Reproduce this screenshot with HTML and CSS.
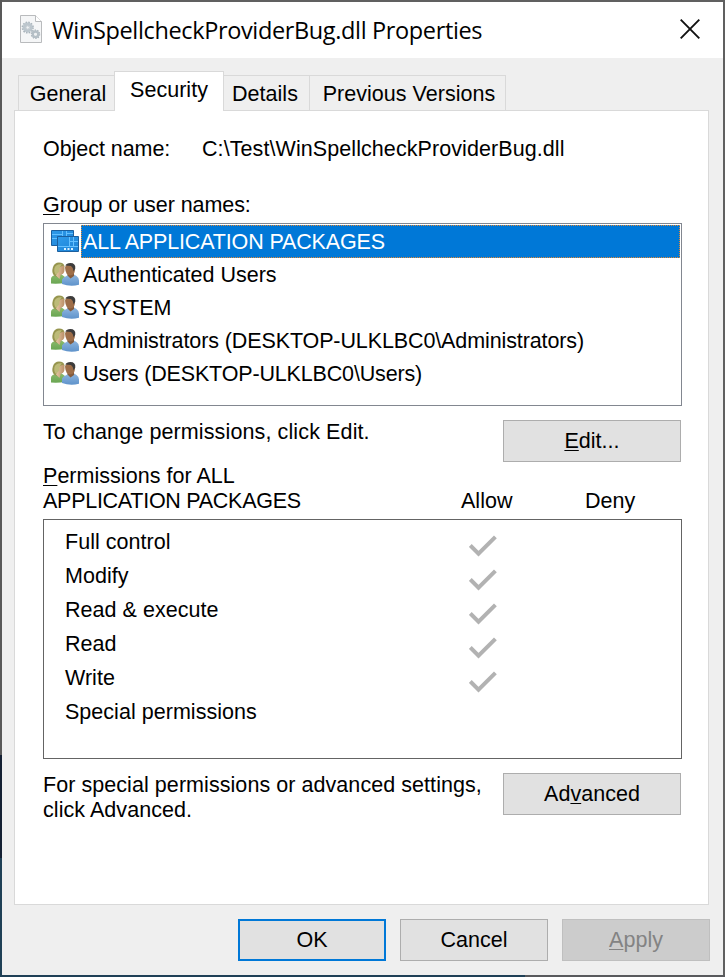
FILE: index.html
```html
<!DOCTYPE html>
<html lang="en">
<head>
<meta charset="utf-8">
<title>WinSpellcheckProviderBug.dll Properties</title>
<link rel="stylesheet" href="styles.css">
</head>
<body>
<svg width="0" height="0" class="defs">
  <defs>
    <linearGradient id="blueShirt" x1="0" y1="0" x2="0" y2="1"><stop offset="0" stop-color="#8fb6df"/><stop offset="1" stop-color="#5f93cb"/></linearGradient>
    <linearGradient id="greenShirt" x1="0" y1="0" x2="0" y2="1"><stop offset="0" stop-color="#8dbb6d"/><stop offset="1" stop-color="#6aa653"/></linearGradient>
    <linearGradient id="face" x1="0" y1="0" x2="1" y2="0"><stop offset="0" stop-color="#e6c7a4"/><stop offset="1" stop-color="#b98e66"/></linearGradient>
    <linearGradient id="tile" x1="0" y1="0" x2="1" y2="1"><stop offset="0" stop-color="#2f9bea"/><stop offset="1" stop-color="#1c82d6"/></linearGradient>
    <symbol id="users" viewBox="0 0 28 24">
      <path d="M0 21.500V17q0-2.500 3-3.500l3-1.500h4l4 3v6q-7 1-14 .5z" fill="url(#greenShirt)"/>
      <path d="M3 13.500Q.3 10.500 2 5 3.500.500 8 .5q5 0 5.500 4l-1 5-3 4-4 1.500z" fill="#96954e"/>
      <path d="M8.500 5l4.300-1.500q1.300 3.500.4 6.500-.9 2.500-3.300 2.500L8.500 17 5 13.500z" fill="url(#face)"/>
      <path d="M3.500 6q2-4.500 7.500-3.500-3 2-2.700 7L5 13Q2.500 10 3.500 6z" fill="#bdbb79"/>
      <path d="M11 22v-4.500q1-2.500 4.500-3.500l2-1.500h5.500l2.500 1.500q2.500 1.500 2.500 4.500v4.300q-9 2-17-.800z" fill="url(#blueShirt)"/>
      <path d="M16.500 11H23v3L19.500 16.500l-3-3z" fill="#855b3c"/>
      <path d="M14 5.500q.5-3 4.800-3 5.200 0 5.200 4.500 0 6-5 6.500-4.300 0-5-8z" fill="#9e6e49"/>
      <path d="M14.300 3.500Q15.500 1 19.300 1q5.500 0 5 5.500l-1.600 3-1-3.500-1.700-2z" fill="#3d3c3c"/>
    </symbol>
    <symbol id="check" viewBox="0 0 28 22">
      <path d="M1.300 10.500l8.200 8.200L26.400 1.800" fill="none" stroke="#b2b2b2" stroke-width="4"/>
    </symbol>
  </defs>
</svg>
<div class="dialog">
  <header class="titlebar">
    <svg class="file-icon" viewBox="0 0 22 28">
      <path d="M.5.500h15l6 6v21H.5z" fill="#f5f6f7" stroke="#b9bbbd"/>
      <path d="M15.500.500v6h6" fill="#fff" stroke="#b9bbbd"/>
      <circle cx="7.700" cy="12.500" r="5.200" fill="none" stroke="#a5b0b8" stroke-width="1.800" stroke-dasharray="1.500 1.220"/>
      <circle cx="7.700" cy="12.500" r="3.600" fill="none" stroke="#bcc6cd" stroke-width="3"/>
      <circle cx="7.700" cy="12.500" r="1.700" fill="#eef1f3" stroke="#a5b0b8" stroke-width=".6"/>
      <circle cx="15.500" cy="19.200" r="4" fill="none" stroke="#a5b0b8" stroke-width="1.500" stroke-dasharray="1.300 1.210"/>
      <circle cx="15.500" cy="19.200" r="2.700" fill="none" stroke="#b5bfc6" stroke-width="2.400"/>
      <circle cx="15.500" cy="19.200" r="1.100" fill="#eef1f3"/>
    </svg>
    <h1>WinSpellcheckProviderBug.dll Properties</h1>
    <svg class="close" viewBox="0 0 20 20"><path d="M.7.700l18.600 18.600M19.300.700L.7 19.300" stroke="#111" stroke-width="1.900"/></svg>
  </header>
  <nav class="tabs">
    <div class="tab general">General</div>
    <div class="tab active">Security</div>
    <div class="tab details">Details</div>
    <div class="tab versions">Previous Versions</div>
  </nav>
  <main class="panel">
    <div class="object"><span class="object-label">Object name:</span><span class="path">C:\Test\WinSpellcheckProviderBug.dll</span></div>
    <div class="label"><u>G</u>roup or user names:</div>
    <ul class="users">
      <li class="selected">
        <svg class="icon" viewBox="0 0 28 24">
          <g fill="url(#tile)" stroke="#1b5f9e"><path d="M.5.500h22v15H.5z"/><path d="M6.500 6.500h21v15h-21z"/></g>
          <path d="M1 8.500h5M11.500 1v5M15.500 1v5M1 4.500h10M16 3.500h6M7 16.500h20M18.500 7v9M22.500 7v9M18.500 11.500h8.500" fill="none" stroke="#64c0ff"/>
          <path d="M13 19h2m1.500 0h2m1.500 0h2" stroke="#d8f0ff" stroke-width="2"/>
        </svg><span class="name all">ALL APPLICATION PACKAGES</span></li>
      <li><svg class="icon"><use href="#users"/></svg><span class="name auth">Authenticated Users</span></li>
      <li><svg class="icon"><use href="#users"/></svg><span class="name auth">SYSTEM</span></li>
      <li><svg class="icon"><use href="#users"/></svg><span class="name admins">Administrators (DESKTOP-ULKLBC0\Administrators)</span></li>
      <li><svg class="icon"><use href="#users"/></svg><span class="name members">Users (DESKTOP-ULKLBC0\Users)</span></li>
    </ul>
    <div class="row edit-row"><span class="hint">To change permissions, click Edit.</span><button class="action"><span><u>E</u>dit...</span></button></div>
    <div class="perm-head"><div class="perm-title"><u>P</u>ermissions for ALL<br><span class="app">APPLICATION PACKAGES</span></div><span class="allow">Allow</span><span class="deny">Deny</span></div>
    <ul class="perms">
      <li><span>Full control</span><svg><use href="#check"/></svg></li>
      <li><span>Modify</span><svg><use href="#check"/></svg></li>
      <li><span>Read &amp; execute</span><svg><use href="#check"/></svg></li>
      <li><span>Read</span><svg><use href="#check"/></svg></li>
      <li><span>Write</span><svg><use href="#check"/></svg></li>
      <li><span>Special permissions</span></li>
    </ul>
    <div class="row advanced-row"><span class="hint">For special permissions or advanced settings,<br>click Advanced.</span><button class="action"><span>Ad<u>v</u>anced</span></button></div>
  </main>
  <footer class="actions">
    <button class="default">OK</button>
    <button>Cancel</button>
    <button disabled><span><u>A</u>pply</span></button>
  </footer>
</div>
</body>
</html>
```
FILE: styles.css
```css
* { box-sizing: border-box; }
body {
  margin: 0;
  width: 725px;
  height: 977px;
  padding: 2px;
  overflow: hidden;
  background: linear-gradient(#595959 0 755px, #142033 755px 858px, #1f4056 858px) left / 2px 100% no-repeat,
    linear-gradient(90deg, #1f4056 0 525px, #58595c 525px) bottom / 100% 2px no-repeat, #606060;
  color: #000;
  font: 21.5px/25px "Liberation Sans", Arial, sans-serif;
  letter-spacing: .03px;
}
.defs { position: absolute; }
.dialog { width: 721px; height: 973px; background: #efefef; }
.titlebar { height: 56px; background: #fff; display: flex; padding-left: 18px; }
.file-icon { width: 22px; height: 28px; margin-top: 13px; }
h1 { margin: 11px 0 0 10px; width: 628px; font: 23.5px/34px "Open Sans", "Noto Sans", sans-serif; letter-spacing: -.36px; white-space: nowrap; }
.close { width: 20px; height: 20px; margin-top: 17px; }
.tabs { height: 52px; display: flex; align-items: flex-end; padding-left: 16px; }
.tab { height: 35px; border: 1px solid #d9d9d9; border-left: 0; border-bottom: 0; padding-top: 6px; text-align: center; white-space: nowrap; }
.tab.general { width: 96px; border-left: 1px solid #d9d9d9; border-right: 0; padding-left: 3px; }
.tab.active { width: 110px; height: 40px; margin-bottom: -1px; background: #fff; border-left: 1px solid #d9d9d9; position: relative; }
.tab.details { width: 86px; padding-right: 3px; }
.tab.versions { width: 196px; padding-left: 3px; }
.panel { width: 695px; height: 795px; margin-left: 12px; padding: 26px 27px 0 28px; background: #fff; border: 1px solid #d9d9d9; }
.object { display: flex; height: 56px; }
.object-label { width: 159px; letter-spacing: -.05px; }
.path { letter-spacing: .08px; }
.label { height: 30px; letter-spacing: -.07px; }
u { text-decoration: underline; text-decoration-thickness: 1px; text-underline-offset: 2px; text-decoration-skip-ink: none; }
ul { list-style: none; margin: 0; padding: 0; }
.users { width: 639px; height: 183px; border: 1px solid #828790; padding: 1px 1px 0 7px; }
.users li { height: 33px; display: flex; align-items: flex-start; }
.icon { width: 28px; height: 24px; flex: none; margin: 4px 2px 0 0; }
.selected .icon { margin-top: 5px; }
.name { height: 33px; padding: 5px 2px 0; flex: 1; white-space: nowrap; }
.all { letter-spacing: -.15px; }
.auth { letter-spacing: 0; }
.admins { letter-spacing: -.11px; }
.members { letter-spacing: -.16px; }
.app { letter-spacing: -.27px; }
.selected .name { background: #0078d7; color: #fff; outline: 1px dotted #e08936; outline-offset: -1px; }
.row { width: 638px; display: flex; justify-content: space-between; }
.edit-row { height: 44px; margin-top: 14px; }
.edit-row .hint { letter-spacing: .12px; }
.hint { white-space: nowrap; letter-spacing: .06px; }
button { font: inherit; letter-spacing: inherit; color: #000; border: 1px solid #adadad; background: #e1e1e1; padding: 0; width: 148px; height: 42px; }
.action { width: 178px; }
.perm-head { display: flex; height: 55px; align-items: flex-start; }
.perm-title { width: 418px; }
.allow { width: 124px; margin-top: 25px; }
.deny { margin-top: 25px; }
.perms { width: 639px; height: 240px; border: 1px solid #646464; padding: 5px 0 0 21px; }
.perms li { height: 34px; display: flex; }
.perms span { width: 404px; padding-top: 5px; }
.perms svg { width: 28px; height: 22px; margin-top: 10px; }
.advanced-row { margin-top: 14px; }
.actions { display: flex; gap: 14px; margin: 14px 0 0 236px; }
.default { border: 2px solid #0078d7; }
button:disabled { color: #838383; background: #ccc; border-color: #bfbfbf; }
```
